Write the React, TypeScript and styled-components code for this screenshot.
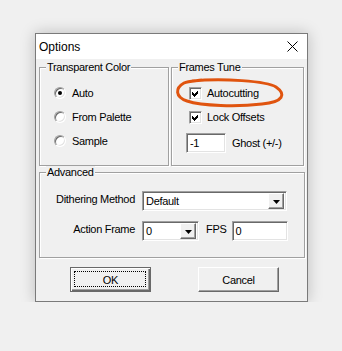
import React from 'react'
import styled, { createGlobalStyle, css } from 'styled-components'

const face = '#f0f0f0'
const shadow = '#a0a0a0'
const darkShadow = '#696969'
const light = '#e3e3e3'

const GlobalStyle = createGlobalStyle`
  body {
    margin: 0;
    background: ${face};
    font-family: "Liberation Sans", Arial, sans-serif;
    font-size: 11px;
    letter-spacing: -0.3px;
    color: #000;
  }
`

const sunken = css`
  border: 1px solid;
  border-color: ${shadow} #fff #fff ${shadow};
  box-shadow: inset 1px 1px ${darkShadow}, inset -1px -1px ${light};
`

const raised = css`
  border: 1px solid;
  border-color: #fff ${darkShadow} ${darkShadow} #fff;
  box-shadow: inset -1px -1px ${shadow};
`

const Window = styled.div`
  box-sizing: border-box;
  width: 273px;
  height: 269px;
  margin: 33px 0 0 35px;
  border: 1px solid #7a7a7a;
  background: ${face};
  box-shadow: 0 0 14px rgba(0, 0, 0, 0.22);
  display: flex;
  flex-direction: column;
`

const TitleBar = styled.div`
  height: 25px;
  background: #fff;
  display: flex;
  align-items: center;
  justify-content: space-between;
  padding: 0 9px 0 3px;
  font-size: 12px;
  letter-spacing: 0;
`

const Body = styled.div`
  padding: 8px 2px 0 3px;
  display: flex;
  flex-direction: column;
`

const TopRow = styled.div`
  display: grid;
  grid-template-columns: 130px 133px;
  gap: 2px;
  height: 99px;
`

const Group = styled.div`
  position: relative;
  box-sizing: border-box;
  border: 1px solid ${shadow};
  box-shadow: inset 1px 1px #fff, 1px 1px #fff;
  display: flex;
  flex-direction: column;
`

const Legend = styled.div`
  align-self: flex-start;
  margin: -7px 0 0 6px;
  padding: 0 1px;
  line-height: 13px;
  background: ${face};
`

const OptionList = styled.div<{ $top: number; $left: number }>`
  display: flex;
  flex-direction: column;
  margin: ${({ $top, $left }) => `${$top}px 0 0 ${$left}px`};
`

const OptionRow = styled.label`
  height: 24px;
  display: flex;
  align-items: center;
  gap: 6px;
`

const Radio = styled.span<{ $checked?: boolean }>`
  box-sizing: border-box;
  width: 12px;
  height: 12px;
  border-radius: 50%;
  background: #fff;
  ${sunken};
  display: flex;
  align-items: center;
  justify-content: center;
  &::after {
    content: '';
    width: 4px;
    height: 4px;
    border-radius: 50%;
    background: ${({ $checked }) => ($checked ? '#000' : 'transparent')};
  }
`

const CheckBox = styled.span`
  box-sizing: border-box;
  width: 13px;
  height: 13px;
  background: #fff;
  ${sunken};
  display: flex;
  align-items: center;
  justify-content: center;
`

const CheckRow = styled(OptionRow)`
  margin-left: 3px;
  gap: 5px;
`

const Field = styled.div<{ $w: number }>`
  box-sizing: border-box;
  width: ${({ $w }) => $w}px;
  height: 20px;
  background: #fff;
  ${sunken};
  padding: 0 3px;
  display: flex;
  align-items: center;
`

const GhostRow = styled.div`
  display: flex;
  align-items: center;
  gap: 6px;
  margin-top: 4px;
`

const Advanced = styled(Group)`
  margin-top: 6px;
`

const FormRows = styled.div`
  display: flex;
  flex-direction: column;
  gap: 10px;
  margin: 12px 0 16px;
`

const FormRow = styled.div`
  display: flex;
  align-items: flex-start;
`

const FieldLabel = styled.span<{ $w?: number; $ml?: number }>`
  width: ${({ $w }) => ($w ? `${$w}px` : 'auto')};
  margin: 0 ${({ $w }) => ($w ? '7px' : '5px')} 0 ${({ $ml }) => $ml || 0}px;
  text-align: right;
  line-height: 16px;
`

const Select = styled(Field)`
  padding: 0 2px 0 3px;
  justify-content: space-between;
`

const DropButton = styled.span`
  box-sizing: border-box;
  width: 16px;
  height: 16px;
  background: ${face};
  ${raised};
  display: flex;
  align-items: center;
  justify-content: center;
  padding-top: 1px;
`

const Buttons = styled.div`
  display: flex;
  gap: 47px;
  margin-top: 9px;
  padding-left: 31px;
`

const Button = styled.button<{ $default?: boolean }>`
  box-sizing: border-box;
  width: 81px;
  height: 25px;
  padding: 0;
  font: inherit;
  letter-spacing: inherit;
  color: #000;
  background: ${face};
  border: 1px solid;
  border-color: #fff ${darkShadow} ${darkShadow} #fff;
  box-shadow: inset -1px -1px ${shadow};
  position: relative;
  ${({ $default }) =>
    $default &&
    css`
      border: 1px solid ${darkShadow};
      box-shadow: inset 1px 1px #fff, inset -1px -1px ${darkShadow}, inset -2px -2px ${shadow};
      &::after {
        content: '';
        position: absolute;
        inset: 3px 4px 4px 3px;
        border: 1px dotted #000;
      }
    `}
`

const Mark = styled.svg`
  position: absolute;
  left: 0;
  top: 0;
  pointer-events: none;
`

const Check = () => (
  <svg width="7" height="7" viewBox="0 0 7 7">
    <path d="M0 2 L2 4 L6 0 L6 3 L2 7 L0 5 Z" fill="#000" shapeRendering="crispEdges" />
  </svg>
)

const Arrow = () => (
  <svg width="7" height="4" viewBox="0 0 7 4">
    <path d="M0 0 H7 L3.5 4 Z" fill="#000" />
  </svg>
)

export default function App() {
  return (
    <>
      <GlobalStyle />
      <Window>
        <TitleBar>
          <span>Options</span>
          <svg width="11" height="11" viewBox="0 0 11 11">
            <path d="M0.5 0.5 L10.5 10.5 M10.5 0.5 L0.5 10.5" stroke="#000" strokeWidth="1" />
          </svg>
        </TitleBar>
        <Body>
          <TopRow>
            <Group>
              <Legend>Transparent Color</Legend>
              <OptionList $top={7} $left={14}>
                <OptionRow>
                  <Radio $checked />
                  Auto
                </OptionRow>
                <OptionRow>
                  <Radio />
                  From Palette
                </OptionRow>
                <OptionRow>
                  <Radio />
                  Sample
                </OptionRow>
              </OptionList>
            </Group>
            <Group>
              <Legend>Frames Tune</Legend>
              <OptionList $top={7} $left={14}>
                <CheckRow>
                  <CheckBox>
                    <Check />
                  </CheckBox>
                  Autocutting
                </CheckRow>
                <CheckRow>
                  <CheckBox>
                    <Check />
                  </CheckBox>
                  Lock Offsets
                </CheckRow>
                <GhostRow>
                  <Field $w={40}>-1</Field>
                  <span>Ghost (+/-)</span>
                </GhostRow>
              </OptionList>
              <Mark width="133" height="60" viewBox="0 0 133 60">
                <path
                  d="M20 13 C50 10 95 13 104 19 C114 26 112 34 90 36 C65 39 30 38 15 33 C3 29 3 20 12 15 C16 13 22 13 30 12"
                  fill="none"
                  stroke="#e0540f"
                  strokeWidth="3"
                />
              </Mark>
            </Group>
          </TopRow>
          <Advanced>
            <Legend>Advanced</Legend>
            <FormRows>
              <FormRow>
                <FieldLabel $w={95}>Dithering Method</FieldLabel>
                <Select $w={145}>
                  <span>Default</span>
                  <DropButton>
                    <Arrow />
                  </DropButton>
                </Select>
              </FormRow>
              <FormRow>
                <FieldLabel $w={95}>Action Frame</FieldLabel>
                <Select $w={57}>
                  <span>0</span>
                  <DropButton>
                    <Arrow />
                  </DropButton>
                </Select>
                <FieldLabel $ml={7}>FPS</FieldLabel>
                <Field $w={56}>0</Field>
              </FormRow>
            </FormRows>
          </Advanced>
          <Buttons>
            <Button $default>OK</Button>
            <Button>Cancel</Button>
          </Buttons>
        </Body>
      </Window>
    </>
  )
}
